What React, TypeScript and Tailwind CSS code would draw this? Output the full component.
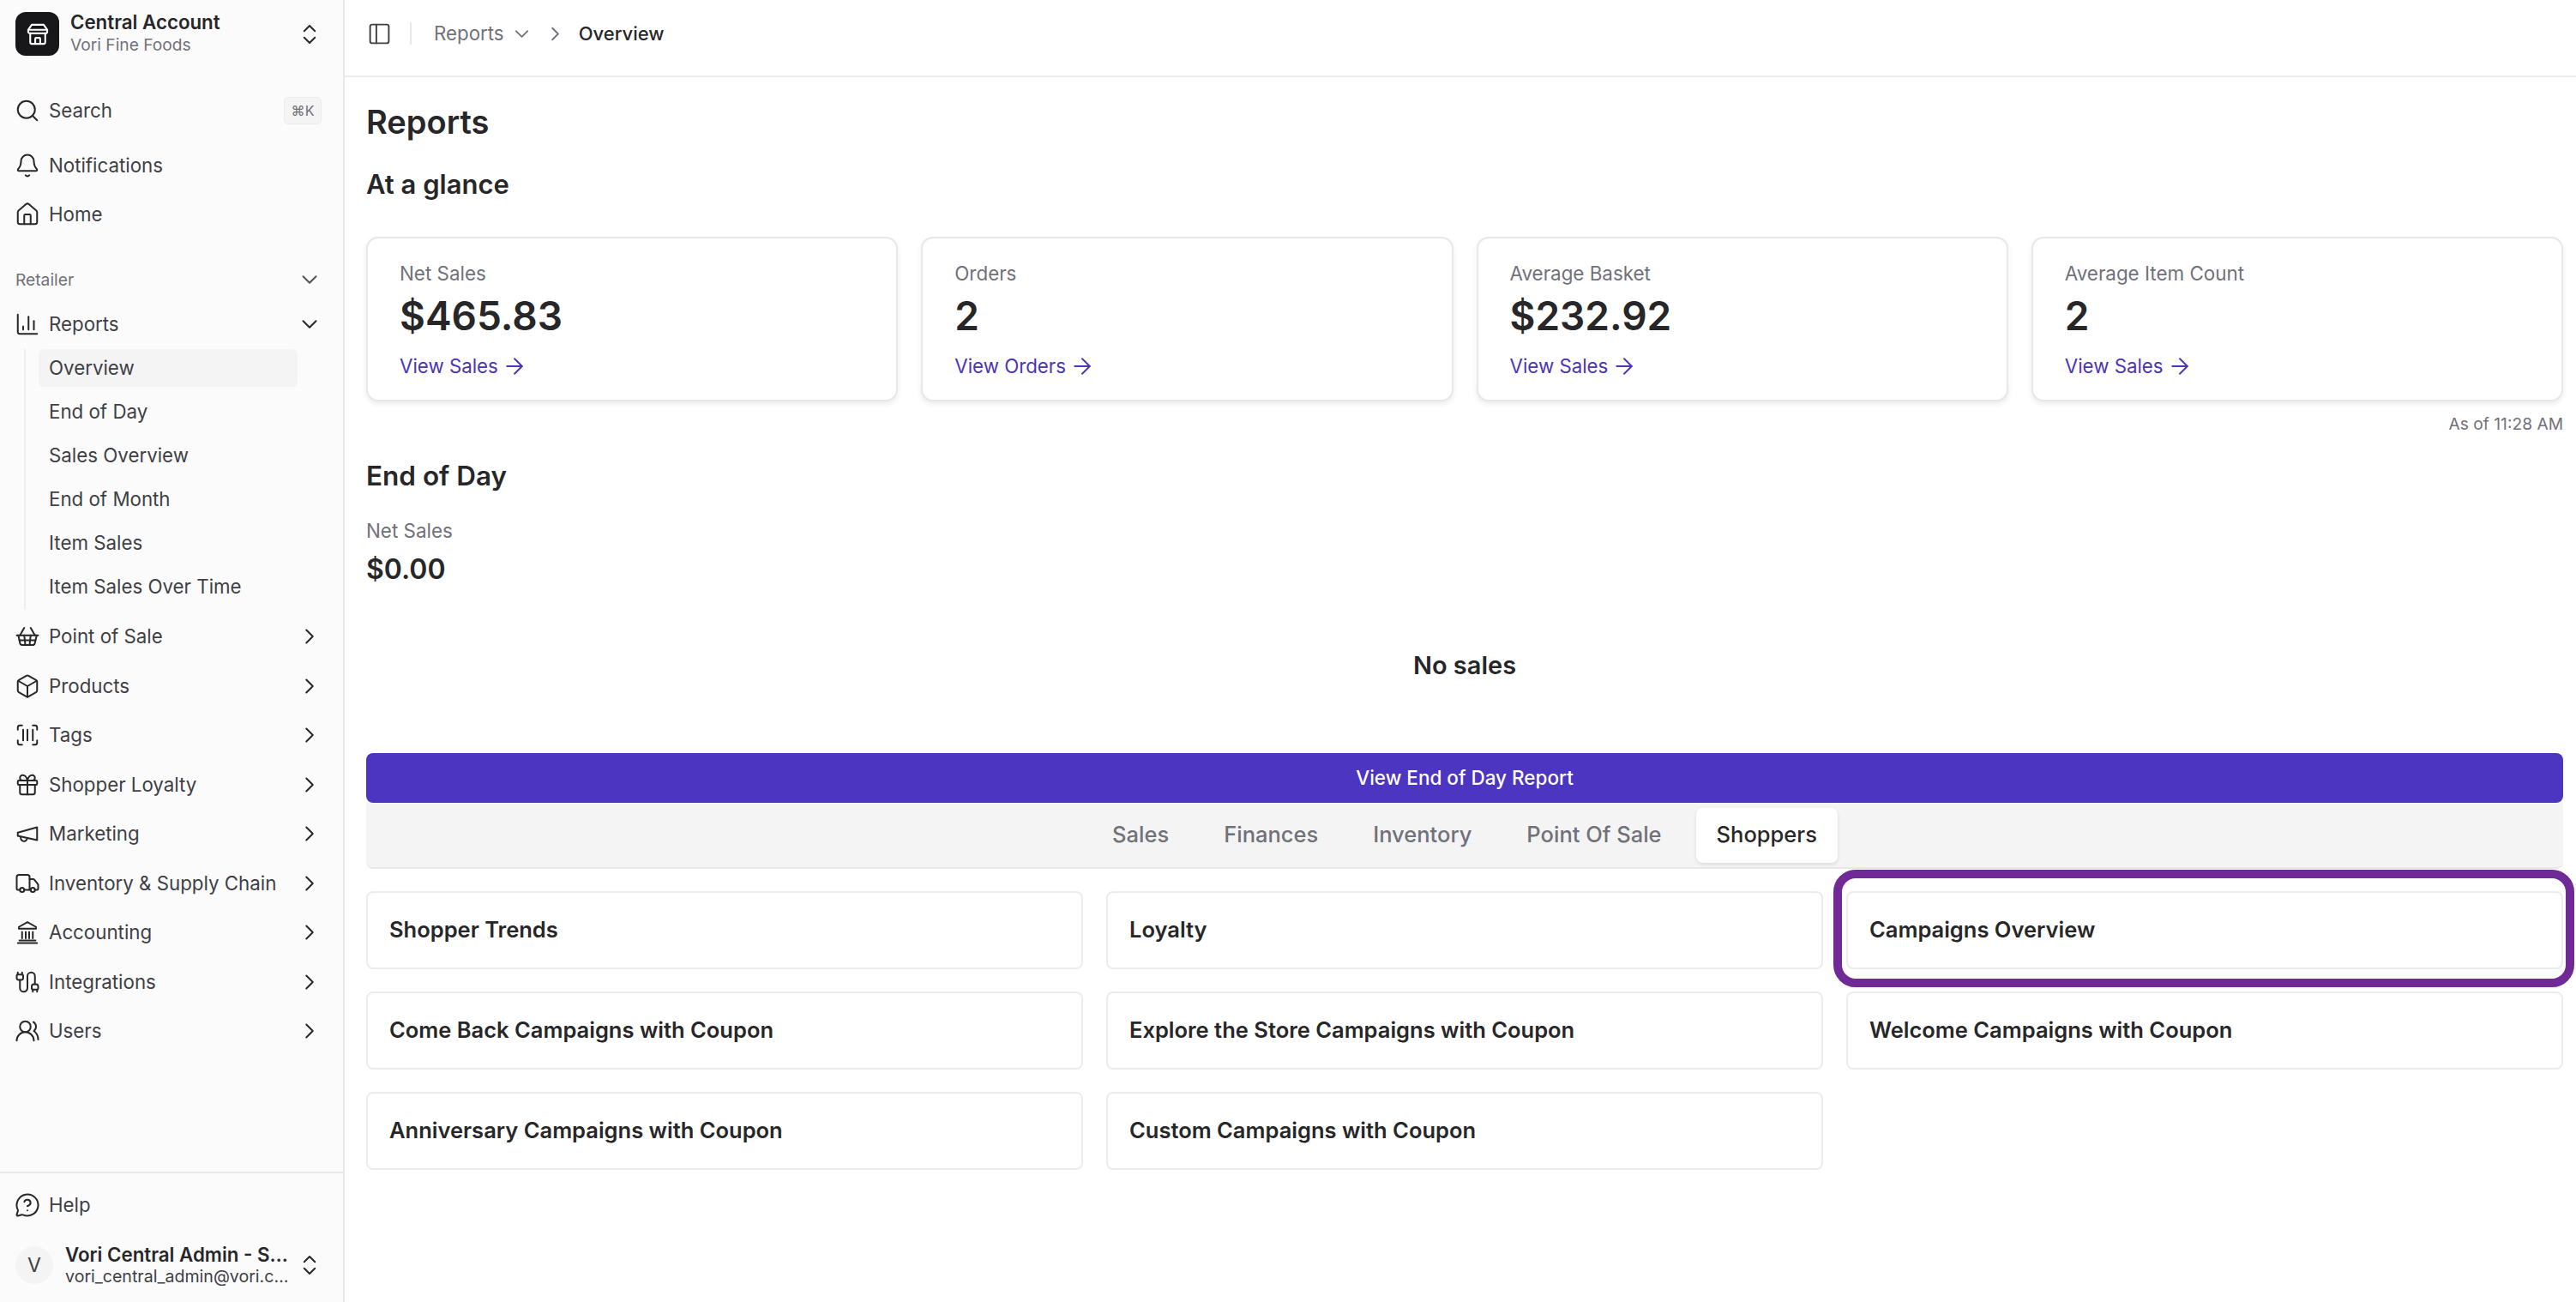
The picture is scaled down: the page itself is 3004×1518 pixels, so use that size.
import {
  ArrowRight,
  Bell,
  Box,
  Cable,
  ChartColumn,
  ChevronDown,
  ChevronRight,
  ChevronsUpDown,
  Gift,
  House,
  MessageCircleQuestion,
  PanelLeft,
  ScanBarcode,
  Search,
  ShoppingBasket,
  Truck,
  UsersRound,
} from 'lucide-react'

type IconProps = { size?: number; strokeWidth?: number; className?: string }

function StoreIcon({ size = 28, strokeWidth = 1.8, className }: IconProps) {
  return (
    <svg width={size} height={size} viewBox="0 0 24 24" fill="none" stroke="currentColor" strokeWidth={strokeWidth} strokeLinecap="round" strokeLinejoin="round" className={className}>
      <path d="M6 2.5h12l3.5 5v2a1.5 1.5 0 0 1-1.5 1.5H4a1.5 1.5 0 0 1-1.5-1.5v-2z" />
      <path d="M2.5 7.5h19" />
      <path d="M4.5 11v9a1.5 1.5 0 0 0 1.5 1.5h12a1.5 1.5 0 0 0 1.5-1.5v-9" />
      <path d="M9.5 21.5v-5a1 1 0 0 1 1-1h3a1 1 0 0 1 1 1v5" />
    </svg>
  )
}

function MegaphoneIcon({ size = 30, strokeWidth = 1.6, className }: IconProps) {
  return (
    <svg width={size} height={size} viewBox="0 0 24 24" fill="none" stroke="currentColor" strokeWidth={strokeWidth} strokeLinecap="round" strokeLinejoin="round" className={className}>
      <path d="m3 11 18-5v12L3 14v-3z" />
      <path d="M11.6 16.8a3 3 0 1 1-5.8-1.6" />
    </svg>
  )
}

function BankIcon({ size = 30, strokeWidth = 1.6, className }: IconProps) {
  return (
    <svg width={size} height={size} viewBox="0 0 24 24" fill="none" stroke="currentColor" strokeWidth={strokeWidth} strokeLinecap="round" strokeLinejoin="round" className={className}>
      <path d="M12 2.5 4 7v1.5h16V7z" />
      <path d="M7 11.5v6M10.4 11.5v6M13.6 11.5v6M17 11.5v6" />
      <path d="M4.5 19.5h15" />
      <path d="M3 22h18" />
    </svg>
  )
}

const subItems = ['End of Day', 'Sales Overview', 'End of Month', 'Item Sales', 'Item Sales Over Time']

const navItems = [
  { icon: ShoppingBasket, label: 'Point of Sale' },
  { icon: Box, label: 'Products' },
  { icon: ScanBarcode, label: 'Tags' },
  { icon: Gift, label: 'Shopper Loyalty' },
  { icon: MegaphoneIcon, label: 'Marketing' },
  { icon: Truck, label: 'Inventory & Supply Chain' },
  { icon: BankIcon, label: 'Accounting' },
  { icon: Cable, label: 'Integrations' },
  { icon: UsersRound, label: 'Users' },
]

const stats = [
  { title: 'Net Sales', value: '$465.83', link: 'View Sales' },
  { title: 'Orders', value: '2', link: 'View Orders' },
  { title: 'Average Basket', value: '$232.92', link: 'View Sales' },
  { title: 'Average Item Count', value: '2', link: 'View Sales' },
]

const tabs = ['Sales', 'Finances', 'Inventory', 'Point Of Sale', 'Shoppers']

const reports = [
  'Shopper Trends',
  'Loyalty',
  'Campaigns Overview',
  'Come Back Campaigns with Coupon',
  'Explore the Store Campaigns with Coupon',
  'Welcome Campaigns with Coupon',
  'Anniversary Campaigns with Coupon',
  'Custom Campaigns with Coupon',
]

function NavRow({ icon: Icon, label, children }: { icon: React.ElementType; label: string; children?: React.ReactNode }) {
  return (
    <div className="flex h-[57px] items-center pl-[17px] pr-[24px] text-[22.3px] text-[#3f3f46]">
      <Icon size={30} strokeWidth={1.6} className="shrink-0 text-[#27272a]" />
      <span className="ml-[10px] flex-1">{label}</span>
      {children}
    </div>
  )
}

function Sidebar() {
  return (
    <aside className="flex h-full w-[402px] shrink-0 flex-col border-r-2 border-[#e8e8e8] bg-[#fbfbfb]">
      <div className="mt-[14px] flex h-[51px] items-center pl-[18px] pr-[24px]">
        <div className="flex h-[51px] w-[51px] items-center justify-center rounded-[12px] bg-[#18181b]">
          <StoreIcon className="text-white" />
        </div>
        <div className="mb-[3px] ml-[13px] flex-1">
          <p className="text-[22.3px] leading-[28px] font-semibold text-[#27272a]">Central Account</p>
          <p className="text-[19.2px] leading-[24px] text-[#71717a]">Vori Fine Foods</p>
        </div>
        <ChevronsUpDown size={30} strokeWidth={1.6} className="text-[#27272a]" />
      </div>

      <div className="mt-[35px]">
        <NavRow icon={Search} label="Search">
          <span className="mr-[1px] flex h-[32px] w-[44px] items-center justify-center rounded-[5px] border border-[#ececec] bg-[#f4f4f5] text-[16px] text-[#71717a]">
            ⌘K
          </span>
        </NavRow>
      </div>
      <div className="mt-[7px]">
        <NavRow icon={Bell} label="Notifications" />
      </div>
      <NavRow icon={House} label="Home" />

      <div className="mt-[28px] flex h-[40px] items-center justify-between pl-[18px] pr-[24px] text-[19.2px] text-[#71717a]">
        <span>Retailer</span>
        <ChevronDown size={30} strokeWidth={1.6} className="text-[#52525b]" />
      </div>

      <div className="mt-[3px]">
        <NavRow icon={ChartColumn} label="Reports">
          <ChevronDown size={30} strokeWidth={1.6} className="text-[#27272a]" />
        </NavRow>
      </div>
      <div className="ml-[28px] mt-[1px] flex flex-col gap-[7px] border-l-2 border-[#eeeeee] pb-[5px] pl-[15px] text-[22.3px] text-[#3f3f46]">
        <div className="flex h-[44px] w-[302px] items-center rounded-[6px] bg-[#f4f4f5] pl-[12px]">Overview</div>
        {subItems.map((item) => (
          <div key={item} className="flex h-[44px] w-[302px] items-center pl-[12px]">
            {item}
          </div>
        ))}
      </div>

      <div className="mt-[2px]">
        {navItems.map((item) => (
          <div key={item.label} className="mt-[0.5px]">
            <NavRow icon={item.icon} label={item.label}>
              <ChevronRight size={30} strokeWidth={1.6} className="text-[#27272a]" />
            </NavRow>
          </div>
        ))}
      </div>

      <div className="mt-auto border-t-2 border-[#e8e8e8] pt-[8px]">
        <NavRow icon={MessageCircleQuestion} label="Help" />
        <div className="mb-[21px] mt-[20px] flex h-[44px] items-center pl-[18px] pr-[24px]">
          <div className="flex h-[44px] w-[44px] shrink-0 items-center justify-center rounded-full bg-[#f4f4f5] text-[23px] text-[#3f3f46]">
            V
          </div>
          <div className="ml-[14px] min-w-0">
            <p className="whitespace-nowrap text-[22.3px] leading-[27px] font-semibold text-[#27272a]">Vori Central Admin - S…</p>
            <p className="whitespace-nowrap text-[19.6px] leading-[25px] text-[#3f3f46]">vori_central_admin@vori.c…</p>
          </div>
          <ChevronsUpDown size={30} strokeWidth={1.6} className="ml-auto shrink-0 text-[#27272a]" />
        </div>
      </div>
    </aside>
  )
}

function StatCard({ title, value, link }: { title: string; value: string; link: string }) {
  return (
    <div className="h-[192px] rounded-[14px] border-2 border-[#e8e8e8] bg-white pl-[37px] pt-[27px] shadow-[0_3px_6px_rgba(0,0,0,0.08)]">
      <p className="text-[22.4px] leading-[28px] text-[#71717a]">{title}</p>
      <p className="mt-[7px] text-[46px] leading-[56px] font-semibold text-[#27272a]">{value}</p>
      <p className="mt-[16px] flex h-[30px] items-center gap-[4px] text-[22.3px] text-[#4c35b5]">
        {link}
        <ArrowRight size={30} strokeWidth={1.5} />
      </p>
    </div>
  )
}

export default function App() {
  return (
    <div className="flex h-screen w-full overflow-hidden bg-white font-['Inter',sans-serif] text-[#27272a]">
      <Sidebar />
      <div className="min-w-0 flex-1">
        <header className="flex h-[90px] items-center border-b-2 border-[#ececec] pb-[10px] pl-[26px]">
          <PanelLeft size={29} strokeWidth={1.6} className="text-[#3f3f46]" />
          <div className="ml-[21px] h-[26px] w-[2px] bg-[#e8e8e8]" />
          <span className="ml-[26px] text-[22.3px] text-[#71717a]">Reports</span>
          <ChevronDown size={27} strokeWidth={1.6} className="ml-[7px] text-[#71717a]" />
          <ChevronRight size={27} strokeWidth={1.6} className="ml-[12px] text-[#71717a]" />
          <span className="ml-[14px] text-[22px] font-medium text-[#27272a]">Overview</span>
        </header>

        <main className="pl-[25px] pr-[15px]">
          <h1 className="mt-[31px] text-[38px] leading-[42px] font-semibold">Reports</h1>
          <h2 className="mt-[33px] text-[31px] leading-[38px] font-semibold">At a glance</h2>

          <div className="mt-[42px] grid grid-cols-4 gap-[27px]">
            {stats.map((s) => (
              <StatCard key={s.title} {...s} />
            ))}
          </div>
          <p className="mt-[12px] text-right text-[19.2px] leading-[28px] text-[#71717a]">As of 11:28 AM</p>

          <h2 className="mt-[28px] text-[31.5px] leading-[38px] font-semibold">End of Day</h2>
          <p className="mt-[30px] text-[22.4px] leading-[30px] text-[#71717a]">Net Sales</p>
          <p className="mt-[9px] text-[32px] leading-[42px] font-semibold">$0.00</p>
          <p className="mt-[71px] text-center text-[29px] leading-[40px] font-semibold">No sales</p>

          <button className="mt-[82px] flex h-[58px] w-full items-center justify-center rounded-[8px] bg-[#4c35c1] text-[22.5px] font-medium text-white">
            View End of Day Report
          </button>

          <div className="flex h-[77px] items-center justify-center gap-[16px] rounded-b-[8px] border-b-2 border-[#e8e8e8] bg-[#f4f4f5] text-[25.5px] font-medium text-[#71717a]">
            {tabs.map((tab) =>
              tab === 'Shoppers' ? (
                <span key={tab} className="flex h-[64px] items-center rounded-[8px] bg-white px-[24px] text-[#27272a] shadow-[0_2px_4px_rgba(0,0,0,0.1)]">
                  {tab}
                </span>
              ) : (
                <span key={tab} className="px-[24px]">
                  {tab}
                </span>
              ),
            )}
          </div>

          <div className="mt-[26px] grid grid-cols-3 gap-x-[27px] gap-y-[26px]">
            {reports.map((r) => (
              <div key={r} className="relative flex h-[91px] items-center rounded-[8px] border-2 border-[#ececec] bg-white pl-[25px] text-[25.5px] font-semibold">
                {r}
                {r === 'Campaigns Overview' && (
                  <span className="absolute -bottom-[23px] -left-[17px] -right-[15px] -top-[27px] rounded-[26px] border-[10px] border-[#6f2a96]" />
                )}
              </div>
            ))}
          </div>
        </main>
      </div>
    </div>
  )
}
